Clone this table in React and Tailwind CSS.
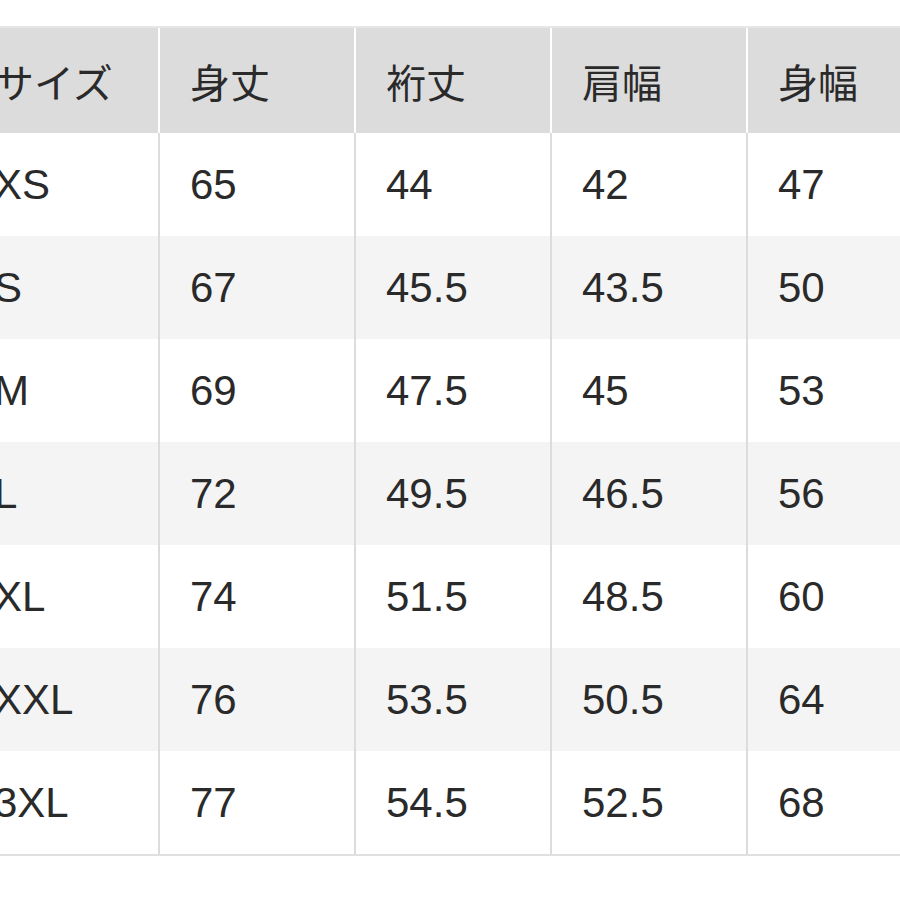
import React from 'react';

const headers = ['サイズ', '身丈', '裄丈', '肩幅', '身幅'];

const rows = [
    ['XS', '65', '44', '42', '47'],
    ['S', '67', '45.5', '43.5', '50'],
    ['M', '69', '47.5', '45', '53'],
    ['L', '72', '49.5', '46.5', '56'],
    ['XL', '74', '51.5', '48.5', '60'],
    ['XXL', '76', '53.5', '50.5', '64'],
    ['3XL', '77', '54.5', '52.5', '68'],
];

const App = () => {
    return (
        <div
            className="w-[900px] h-[900px] bg-white overflow-hidden text-[#2a2a2a]"
            style={{ fontFamily: '"Liberation Sans", "Noto Sans CJK JP", sans-serif' }}
        >
            <div className="h-[26px]" />
            <div className="ml-[-36px] w-[1000px] border-t-2 border-[#e6e6e6]">
                {/* header */}
                <div className="flex h-[105px] bg-[#dcdcdc]">
                    {headers.map((h, i) => (
                        <div
                            key={h}
                            className={`w-[196px] shrink-0 flex items-center pl-[30px] pt-[6px] text-[40px] ${i < headers.length - 1 ? 'border-r-2 border-white' : ''}`}
                        >
                            {h}
                        </div>
                    ))}
                </div>

                {/* body */}
                {rows.map((row, r) => (
                    <div
                        key={row[0]}
                        className={`flex h-[103px] ${r % 2 === 1 ? 'bg-[#f4f4f4]' : 'bg-white'}`}
                    >
                        {row.map((cell, i) => (
                            <div
                                key={i}
                                className={`w-[196px] shrink-0 flex items-center pl-[30px] text-[42px] ${i < row.length - 1 ? 'border-r-2 border-[#dcdcdc]' : ''}`}
                            >
                                {cell}
                            </div>
                        ))}
                    </div>
                ))}
                <div className="h-[2px] bg-[#e0e0e0]" />
                <div className="h-[44px]" />
                <div className="h-[2px] bg-[#ececec]" />
            </div>
        </div>
    );
};

export default App;
